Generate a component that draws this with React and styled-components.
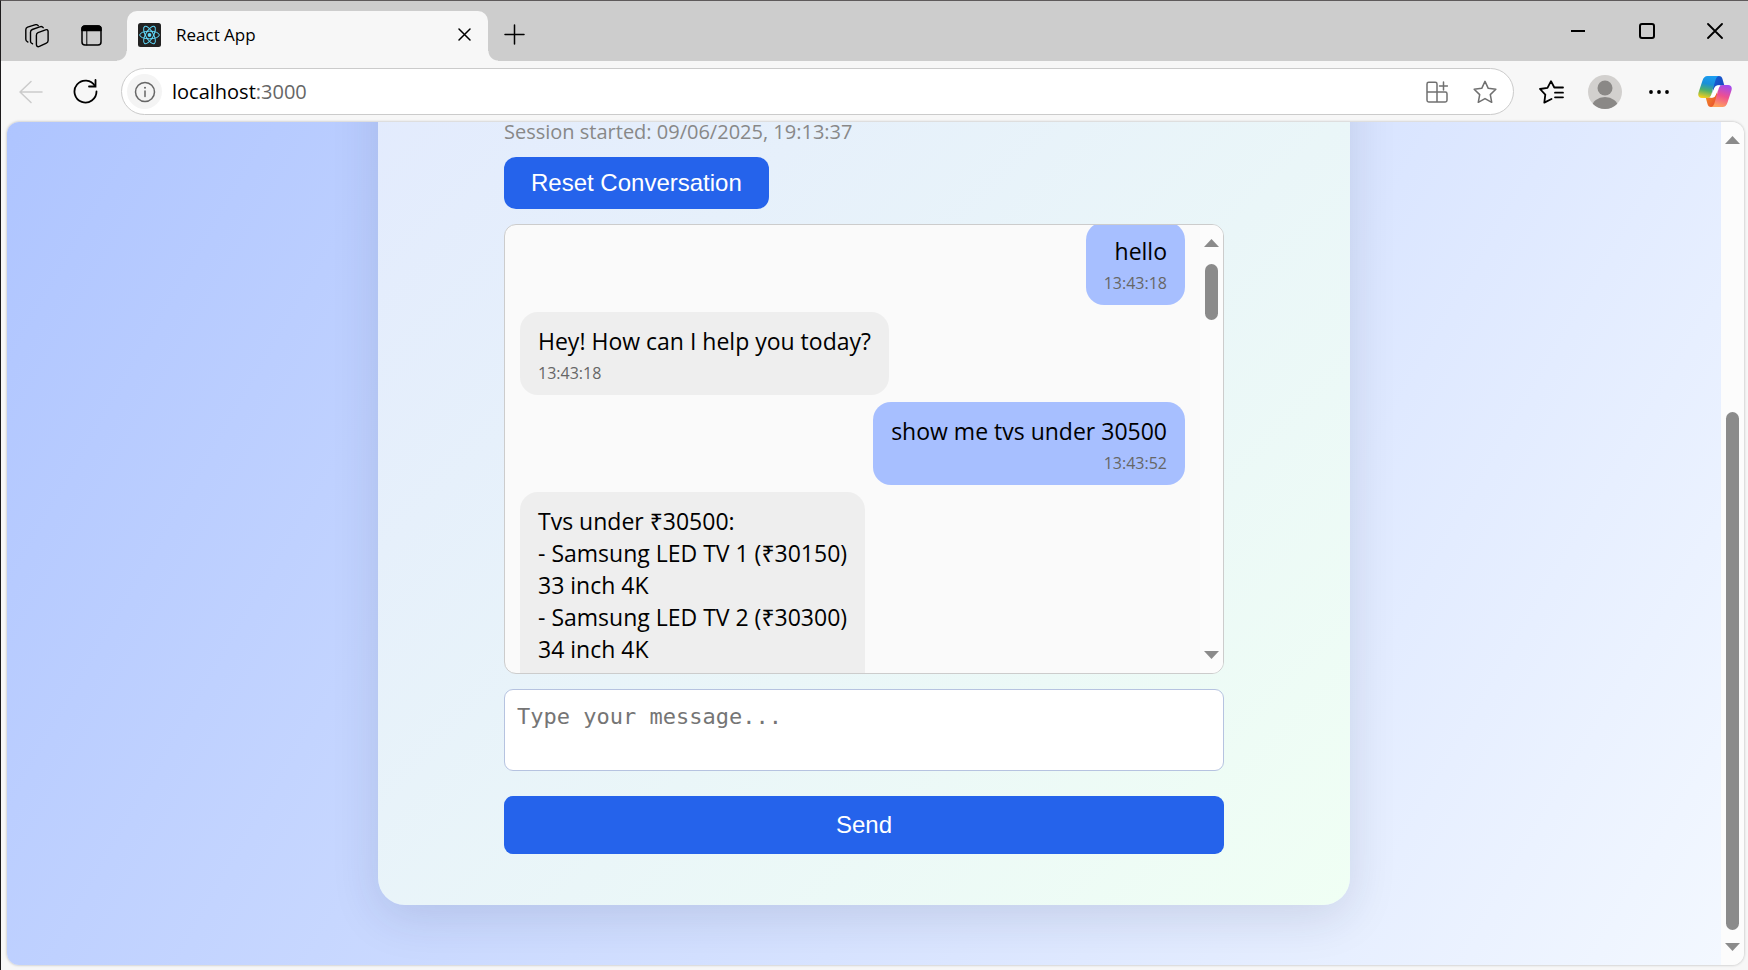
import React, { useLayoutEffect, useRef } from "react";
import styled, { createGlobalStyle } from "styled-components";

const ui = '"Segoe UI", "Open Sans", "Noto Sans", sans-serif';
const arial = 'Arial, "Liberation Sans", sans-serif';

const GlobalStyle = createGlobalStyle`
  *, *::before, *::after { box-sizing: border-box; }
  html, body { margin: 0; height: 100%; overflow: hidden; }
  button, input, textarea { margin: 0; font: inherit; }
`;

const Window = styled.div`
  height: 100vh;
  display: flex;
  flex-direction: column;
  background: #f7f7f7;
  border-top: 1px solid #5e5a5b;
  border-left: 1px solid #1d1b1c;
  font-family: ${ui};
  color: #000;
`;

const TitleBar = styled.header`
  height: 60px;
  flex: none;
  display: flex;
  align-items: stretch;
  background: #cdcdcd;
`;

const IconButton = styled.button`
  width: ${(p) => p.$w || 36}px;
  flex: none;
  padding: 0;
  border: 0;
  background: transparent;
  display: flex;
  align-items: center;
  justify-content: center;
  color: ${(p) => p.$color || "#000"};
`;

const TabActions = styled.div`
  display: flex;
  padding: 9px 18px 0 17px;
  gap: 17px;
`;

const Tab = styled.div`
  position: relative;
  width: 361px;
  margin-top: 10px;
  padding: 0 6px 3px 11px;
  display: flex;
  align-items: center;
  gap: 15px;
  background: #f7f7f7;
  border-radius: 10px 10px 0 0;
  font-size: 17px;

  &::before, &::after {
    content: "";
    position: absolute;
    bottom: 0;
    width: 10px;
    height: 10px;
  }
  &::before {
    right: 100%;
    background: radial-gradient(circle at 0 0, #cdcdcd 9px, #f7f7f7 10px);
  }
  &::after {
    left: 100%;
    background: radial-gradient(circle at 100% 0, #cdcdcd 9px, #f7f7f7 10px);
  }
`;

const TabTitle = styled.span`
  flex: 1;
`;

const NewTab = styled.div`
  display: flex;
  flex: 1;
  padding: 6px 0 0 8px;
`;

const WindowControls = styled.div`
  display: flex;
  height: 60px;
`;

const Toolbar = styled.nav`
  height: 61px;
  flex: none;
  display: flex;
  align-items: stretch;
  padding: 7px 13px 7px 12px;
`;

const NavButtons = styled.div`
  display: flex;
  gap: 18px;
  padding-right: 18px;
`;

const AddressBar = styled.form`
  flex: 1;
  min-width: 0;
  display: flex;
  align-items: stretch;
  background: #fff;
  border: 1px solid #cbcbcb;
  border-radius: 24px;
  padding: 0 10px 0 5px;
`;

const SiteInfo = styled.button`
  width: 35px;
  height: 35px;
  align-self: center;
  padding: 0;
  border: 0;
  border-radius: 50%;
  background: #f4f4f4;
  display: flex;
  align-items: center;
  justify-content: center;
`;

const Url = styled.a`
  flex: 1;
  align-self: center;
  padding-left: 10px;
  font-size: 20px;
  line-height: 28px;
  color: #000;
  text-decoration: none;
  span { color: #666; }
`;

const AddressActions = styled.div`
  display: flex;
  gap: 12px;
`;

const ToolActions = styled.div`
  display: flex;
  gap: 18px;
  padding-left: 19px;
`;

const Viewport = styled.div`
  flex: 1;
  min-height: 0;
  margin: 0 4px 5px 6px;
  display: flex;
  overflow: hidden;
  border-radius: 12px;
  box-shadow: 0 0 3px rgba(0, 0, 0, 0.28);
`;

const Scroller = styled.div`
  flex: 1;
  min-width: 0;
  display: flex;
  flex-direction: column;
  justify-content: flex-end;
  overflow: hidden;
`;

const Page = styled.main`
  flex: none;
  min-height: 1258px;
  padding: 60px 24px;
  display: flex;
  justify-content: center;
  background: linear-gradient(120deg, #a7bfff 0%, #f3f8ff 100%);
`;

const Card = styled.section`
  width: 972px;
  max-width: 100%;
  padding: 51px 24px;
  display: flex;
  flex-direction: column;
  justify-content: flex-end;
  align-items: center;
  border-radius: 27px;
  background: linear-gradient(135deg, #e0e7ff 0%, #f0fff4 100%);
  box-shadow: 0 12px 48px rgba(31, 41, 80, 0.13);
`;

const Chat = styled.div`
  width: 720px;
  max-width: 100%;
  display: flex;
  flex-direction: column;
  align-items: stretch;
`;

const Session = styled.p`
  margin: 0 0 15px;
  font-size: 20px;
  line-height: 20px;
  color: #888;
`;

const PrimaryButton = styled.button`
  align-self: ${(p) => (p.$wide ? "stretch" : "flex-start")};
  height: ${(p) => (p.$wide ? 58 : 52)}px;
  padding: 0 27px;
  border: 0;
  border-radius: ${(p) => (p.$wide ? 9 : 12)}px;
  background: #2563eb;
  color: #fff;
  font-family: ${arial};
  font-size: 24px;
`;

const MessageBox = styled.div`
  height: 450px;
  margin: 15px 0;
  display: flex;
  background: #fafafa;
  border: 1px solid #ccc;
  border-radius: 12px;
  overflow: hidden;
`;

const MessageList = styled.div`
  flex: 1;
  min-width: 0;
  overflow: hidden;
  padding: 15px;
  display: flex;
  flex-direction: column;
  gap: 7px;
`;

const Bubble = styled.div`
  flex: none;
  align-self: ${(p) => (p.$mine ? "flex-end" : "flex-start")};
  text-align: ${(p) => (p.$mine ? "right" : "left")};
  padding: 13px 18px 9px;
  border-radius: 18px;
  background: ${(p) => (p.$mine ? "#a7bfff" : "#eee")};
  font-size: 23px;
  line-height: 32px;
  white-space: pre-line;
`;

const Time = styled.time`
  display: block;
  padding-top: 3px;
  font-size: 16px;
  line-height: 26px;
  color: #666;
`;

const Bar = styled.div`
  width: 23px;
  flex: none;
  display: flex;
  flex-direction: column;
  align-items: center;
  justify-content: space-between;
  padding: 14px 0;
  background: #fcfcfc;
`;

const Track = styled.div`
  flex: 1;
  margin: 13px 0;
  display: flex;
  flex-direction: column;
`;

const Thumb = styled.div`
  width: 13px;
  border-radius: 7px;
  background: #8b8b8b;
`;

const Gap = styled.div`
  flex: none;
`;

const Composer = styled.form`
  display: flex;
  flex-direction: column;
  gap: 25px;
`;

const MessageInput = styled.textarea`
  height: 82px;
  padding: 13px 12px;
  resize: none;
  border: 1px solid #b6c3e0;
  border-radius: 9px;
  background: #fff;
  font-family: Consolas, "DejaVu Sans Mono", monospace;
  font-size: 22px;
  line-height: 28px;
  &::placeholder { color: #757575; opacity: 1; }
`;

function Svg({ w, h = w, vb, children, sw = 1.5 }) {
  return (
    <svg width={w} height={h} viewBox={vb || `0 0 ${w} ${h}`} fill="none" stroke="currentColor"
      strokeWidth={sw} strokeLinecap="round" strokeLinejoin="round" aria-hidden="true">
      {children}
    </svg>
  );
}

function ScrollBar({ before, size }) {
  return (
    <Bar>
      <svg width="15" height="8" aria-hidden="true"><path d="M7.5 0 15 8H0Z" fill="#8b8b8b" /></svg>
      <Track>
        <Gap style={{ height: `${before}%` }} />
        <Thumb style={{ height: `${size}%` }} />
      </Track>
      <svg width="15" height="8" aria-hidden="true"><path d="M0 0H15L7.5 8Z" fill="#8b8b8b" /></svg>
    </Bar>
  );
}

function ReactLogo() {
  return (
    <svg width="23" height="24" viewBox="0 0 23 24" aria-hidden="true">
      <rect width="23" height="24" rx="2.5" fill="#222" />
      <g transform="translate(11.5 12)" fill="none" stroke="#61dafb" strokeWidth="1">
        <circle r="1.9" fill="#61dafb" stroke="none" />
        <ellipse rx="9.8" ry="3.8" />
        <ellipse rx="9.8" ry="3.8" transform="rotate(60)" />
        <ellipse rx="9.8" ry="3.8" transform="rotate(120)" />
      </g>
    </svg>
  );
}

function CopilotLogo() {
  return (
    <svg width="34" height="31" viewBox="0 0 34 31" aria-hidden="true">
      <defs>
        <linearGradient id="cpA" x1="0.5" y1="0" x2="0.3" y2="1">
          <stop offset="0" stopColor="#1b9df0" />
          <stop offset="0.35" stopColor="#1a8fd8" />
          <stop offset="0.65" stopColor="#4fb06a" />
          <stop offset="1" stopColor="#f5cf1c" />
        </linearGradient>
        <linearGradient id="cpB" x1="0.7" y1="0" x2="0.4" y2="1">
          <stop offset="0" stopColor="#a44af0" />
          <stop offset="0.5" stopColor="#ee5090" />
          <stop offset="1" stopColor="#ffa25c" />
        </linearGradient>
        <linearGradient id="cpC" x1="0" y1="0" x2="1" y2="1">
          <stop offset="0" stopColor="#1463d6" />
          <stop offset="1" stopColor="#1b3fb8" />
        </linearGradient>
        <linearGradient id="cpD" x1="0" y1="0" x2="1" y2="1">
          <stop offset="0" stopColor="#f4a028" />
          <stop offset="1" stopColor="#e8442e" />
        </linearGradient>
      </defs>
      <path d="M16 0h5c2 0 3 1 3.500 3l1.800 6.500h-5.500c-2.500 0-3.600 1-4.400 3.500l-2 6Z" fill="url(#cpC)" />
      <path d="M18 31h-5c-2 0-3-1-3.500-3l-1.800-6.500h5.500c2.500 0 3.600-1 4.400-3.500l2-6Z" fill="url(#cpD)" />
      <path d="M16 12.500c.8-2 2-3.300 4.300-3.300h1.900l-4.200 9.300c-.8 2-2 3.300-4.300 3.300h-1.500Z" fill="#fff" />
      <path d="M21 0H9.500C7 0 5.500 1.500 4.500 4.500L.7 16c-1.200 3.500 0 6 3.300 6h5c2.300 0 3.600-1.200 4.300-3.500L17.200 5C18 2 19 .5 21 0Z" fill="url(#cpA)" />
      <path d="M13 31h11.500c2.500 0 4-1.500 5-4.500L33.300 15c1.200-3.500 0-6-3.300-6h-5c-2.300 0-3.600 1.200-4.300 3.500L16.800 26c-.8 3-1.800 4.500-3.800 5Z" fill="url(#cpB)" />
    </svg>
  );
}

const messages = [
  { mine: true, text: "hello", time: "13:43:18" },
  { text: "Hey! How can I help you today?", time: "13:43:18" },
  { mine: true, text: "show me tvs under 30500", time: "13:43:52" },
  {
    text: "Tvs under ₹30500:\n- Samsung LED TV 1 (₹30150)\n33 inch 4K\n- Samsung LED TV 2 (₹30300)\n34 inch 4K",
    time: "13:43:52",
  },
];

const star = "M12 2.200 15 8.600 22 9.500 16.900 14.400 18.200 21.500 12 18.100 5.800 21.500 7.100 14.400 2 9.500 9 8.600Z";

export default function App() {
  const list = useRef(null);
  useLayoutEffect(() => {
    list.current.scrollTop = 18;
  }, []);

  return (
    <Window>
      <GlobalStyle />
      <TitleBar>
        <TabActions>
          <IconButton $w={38} aria-label="Workspaces">
            <Svg w={24} sw={1.4}>
              <path d="M13 8.600 20.500 5.800c1.600-.6 2.600.2 2.600 1.800v9c0 1.300-.5 2.100-1.700 2.600l-7 3.200c-1.800.8-3-.1-3-1.900V11.200c0-1.300.5-2.100 1.600-2.600Z" />
              <path d="M7.500 19.800c-1.400-.3-2-1.200-2-2.600V8.200c0-1.400.6-2.200 1.800-2.700l7.400-2.700c1.600-.6 2.800-.3 3.500.9" />
              <path d="M2.800 18C1.400 17.600.8 16.700.8 15.300V5.800c0-1.400.6-2.200 1.800-2.700L9.800.9c1.600-.5 2.700-.2 3.400.8" />
            </Svg>
          </IconButton>
          <IconButton $w={36} aria-label="Tab actions">
            <Svg w={21}>
              <rect x="1" y="1" width="19" height="19" rx="3" />
              <path d="M1 5.500V4a3 3 0 0 1 3-3h13a3 3 0 0 1 3 3v1.500Z" fill="currentColor" />
              <path d="M5.800 6v14" strokeWidth="1" />
            </Svg>
          </IconButton>
        </TabActions>
        <Tab>
          <ReactLogo />
          <TabTitle>React App</TabTitle>
          <IconButton aria-label="Close tab">
            <Svg w={13}><path d="M1 1 12 12M12 1 1 12" /></Svg>
          </IconButton>
        </Tab>
        <NewTab>
          <IconButton aria-label="New tab">
            <Svg w={21}><path d="M10.500 1v19M1 10.500h19" /></Svg>
          </IconButton>
        </NewTab>
        <WindowControls>
          <IconButton $w={69} aria-label="Minimize">
            <Svg w={16} sw={2}><path d="M1 8h14" strokeLinecap="butt" /></Svg>
          </IconButton>
          <IconButton $w={69} aria-label="Maximize">
            <Svg w={16} sw={2}><rect x="1" y="1" width="14" height="14" rx="2" /></Svg>
          </IconButton>
          <IconButton $w={67} aria-label="Close">
            <Svg w={16} sw={1.8}><path d="M1 1 15 15M15 1 1 15" /></Svg>
          </IconButton>
        </WindowControls>
      </TitleBar>

      <Toolbar>
        <NavButtons>
          <IconButton aria-label="Back" $color="#cbcbcb">
            <Svg w={24}><path d="M23 12H1M12 1.500 1 12l11 10.500" /></Svg>
          </IconButton>
          <IconButton aria-label="Refresh">
            <Svg w={25} sw={1.8}>
              <path d="M22 7A11 11 0 1 0 23.500 12.500" />
              <path d="M22.500 1v6.500H16" strokeLinejoin="miter" />
            </Svg>
          </IconButton>
        </NavButtons>
        <AddressBar onSubmit={(e) => e.preventDefault()}>
          <SiteInfo type="button" aria-label="Site information">
            <Svg w={22}>
              <g stroke="#666"><circle cx="11" cy="11" r="9.500" /><path d="M11 10v5.500" /><path d="M11 6.700v.1" strokeWidth="2" /></g>
            </Svg>
          </SiteInfo>
          <Url href="http://localhost:3000">localhost<span>:3000</span></Url>
          <AddressActions>
            <IconButton type="button" aria-label="Install app" $color="#707070">
              <Svg w={22}>
                <path d="M11 11V3a1.700 1.700 0 0 0-1.700-1.700H2.700A1.700 1.700 0 0 0 1 3v16.300A1.700 1.700 0 0 0 2.700 21h16.600a1.700 1.700 0 0 0 1.700-1.700v-6.600a1.700 1.700 0 0 0-1.700-1.700H1M11 11v10M17.500 1v8M13.500 5h8" />
              </Svg>
            </IconButton>
            <IconButton type="button" aria-label="Add to favorites" $color="#707070">
              <Svg w={26} vb="0 0 24 24" sw={1.4}><path d={star} /></Svg>
            </IconButton>
          </AddressActions>
        </AddressBar>
        <ToolActions>
          <IconButton aria-label="Favorites">
            <Svg w={25} h={24} sw={1.8}>
              <path d="M12.500 19 5.300 22.600 6.300 14.600 1 9l7.500-1.200L12 1.200l3.300 6.300H24M16 12.700h8M16 17.300h8" />
            </Svg>
          </IconButton>
          <IconButton aria-label="Profile">
            <svg width="34" height="34" viewBox="0 0 34 34" aria-hidden="true">
              <defs><clipPath id="av"><circle cx="17" cy="17" r="17" /></clipPath></defs>
              <g clipPath="url(#av)">
                <rect width="34" height="34" fill="#d2d0ce" />
                <circle cx="17" cy="13" r="7.500" fill="#8a8886" />
                <ellipse cx="17" cy="32" rx="13" ry="10" fill="#8a8886" />
              </g>
            </svg>
          </IconButton>
          <IconButton aria-label="Settings and more">
            <svg width="20" height="4" aria-hidden="true">
              <circle cx="2" cy="2" r="1.900" /><circle cx="10" cy="2" r="1.900" /><circle cx="18" cy="2" r="1.900" />
            </svg>
          </IconButton>
          <IconButton $w={40} aria-label="Copilot"><CopilotLogo /></IconButton>
        </ToolActions>
      </Toolbar>

      <Viewport>
        <Scroller>
          <Page>
            <Card>
              <Chat>
                <Session>Session started: 09/06/2025, 19:13:37</Session>
                <PrimaryButton type="button">Reset Conversation</PrimaryButton>
                <MessageBox>
                  <MessageList ref={list}>
                    {messages.map((m, i) => (
                      <Bubble key={i} $mine={m.mine}>
                        {m.text}
                        <Time>{m.time}</Time>
                      </Bubble>
                    ))}
                  </MessageList>
                  <ScrollBar before={1} size={15} />
                </MessageBox>
                <Composer onSubmit={(e) => e.preventDefault()}>
                  <MessageInput aria-label="Message" placeholder="Type your message..." />
                  <PrimaryButton $wide type="submit">Send</PrimaryButton>
                </Composer>
              </Chat>
            </Card>
          </Page>
        </Scroller>
        <ScrollBar before={33} size={67} />
      </Viewport>
    </Window>
  );
}
